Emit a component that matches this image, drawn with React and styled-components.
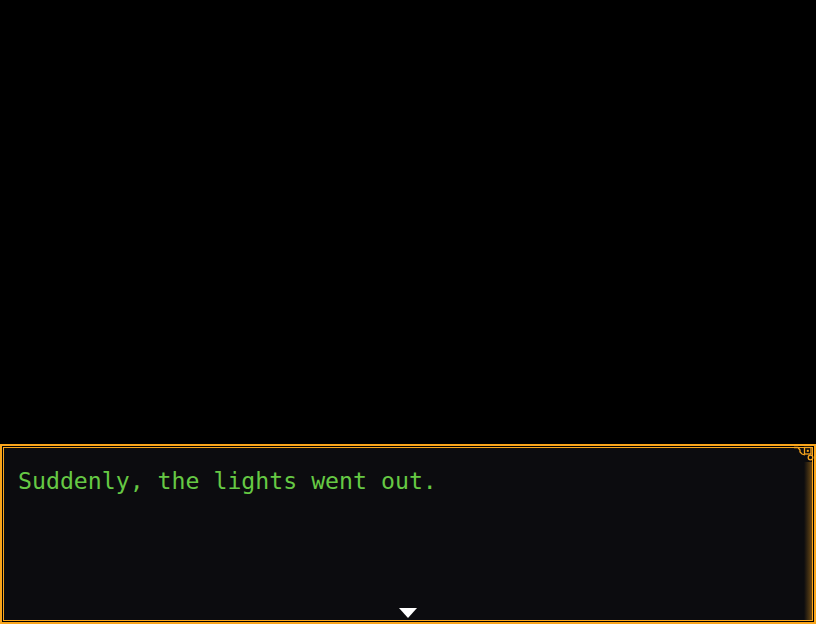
import React from 'react';
import styled, { createGlobalStyle } from 'styled-components';

const Global = createGlobalStyle`
  html, body { margin: 0; padding: 0; background: #000; }
  #root { height: 624px; }
`;

const Screen = styled.div`
  height: 624px;
  width: 816px;
  display: flex;
  flex-direction: column;
  background: #000;
  overflow: hidden;
`;

const Stage = styled.div`
  flex: 1;
`;

const Window = styled.div`
  position: relative;
  height: 180px;
  box-sizing: border-box;
  border: 2px solid #f9a51c;
  padding: 1px;
  background: #000;
`;

const Inner = styled.div`
  position: relative;
  height: 100%;
  box-sizing: border-box;
  border: 1px solid #f9a51c;
  background: #0c0c0f;
  padding: 18px 14px;

  &::after {
    content: '';
    position: absolute;
    top: 14px;
    right: 0;
    bottom: 0;
    width: 8px;
    background: linear-gradient(to left, rgba(249,165,28,0.4), rgba(249,165,28,0));
  }
`;

const Message = styled.p`
  margin: 0;
  font-family: "DejaVu Sans Mono", monospace;
  font-size: 23.2px;
  line-height: 30px;
  color: #66c944;
`;

const Ornament = styled.svg`
  position: absolute;
  top: 0;
  right: 0;
`;

const Pause = styled.div`
  position: absolute;
  left: 50%;
  bottom: 2px;
  transform: translateX(-50%);
  width: 0;
  height: 0;
  border-left: 9px solid transparent;
  border-right: 9px solid transparent;
  border-top: 10px solid #fff;
`;

export default function App() {
  return (
    <Screen>
      <Global />
      <Stage />
      <Window>
        <Inner>
          <Message>Suddenly, the lights went out.</Message>
          <Pause />
        </Inner>
        <Ornament width="20" height="20" viewBox="0 0 20 20">
          <path d="M0 1.5 H4 L6 4 V6 L8 8 L11 9" fill="none" stroke="#f9a51c" strokeWidth="1.3" />
          <rect x="10.5" y="1.5" width="6.5" height="6.5" fill="none" stroke="#f9a51c" strokeWidth="1.3" />
          <rect x="12.8" y="3.8" width="2" height="2" fill="#f9a51c" />
          <circle cx="16.5" cy="11.5" r="2.3" fill="none" stroke="#f9a51c" strokeWidth="1.3" />
        </Ornament>
      </Window>
    </Screen>
  );
}
